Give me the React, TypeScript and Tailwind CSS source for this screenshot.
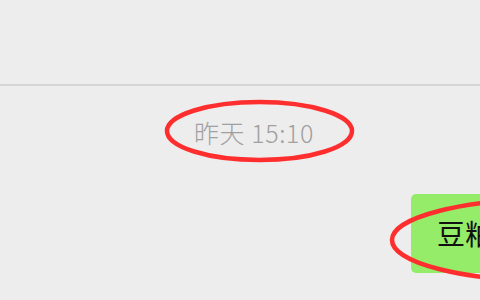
import React from 'react';

const font = { fontFamily: '"Noto Sans CJK SC", "Noto Sans", sans-serif' };

export default function App() {
  return (
    <div className="relative w-[480px] h-[300px] overflow-hidden bg-[#ededed]" style={font}>
      {/* title bar area */}
      <div className="h-[86px] border-b-2 border-[#d6d6d6]" />

      {/* time divider */}
      <div className="mt-[30px] pl-[28px] flex justify-center">
        <span className="text-[25px] leading-[32px] font-light tracking-[0.6px] text-[#a0a0a0]">昨天 15:10</span>
      </div>

      {/* outgoing message */}
      <div className="mt-[46px] pl-[411px] whitespace-nowrap">
        <div className="inline-block rounded-[5px] bg-[#95ec69] pl-[26px] pr-6 py-[22px] text-[28px] leading-[35px] text-[#111]">
          豆粕价格
        </div>
      </div>

      {/* red annotation marks */}
      <svg className="absolute inset-0 pointer-events-none" width="480" height="300" viewBox="0 0 480 300">
        <ellipse cx="259.5" cy="131" rx="92.5" ry="29" fill="none" stroke="#ff2e2e" strokeWidth="4.5" />
        <ellipse cx="552" cy="240" rx="160" ry="41" fill="none" stroke="#ff2e2e" strokeWidth="4.5" />
      </svg>
    </div>
  );
}
